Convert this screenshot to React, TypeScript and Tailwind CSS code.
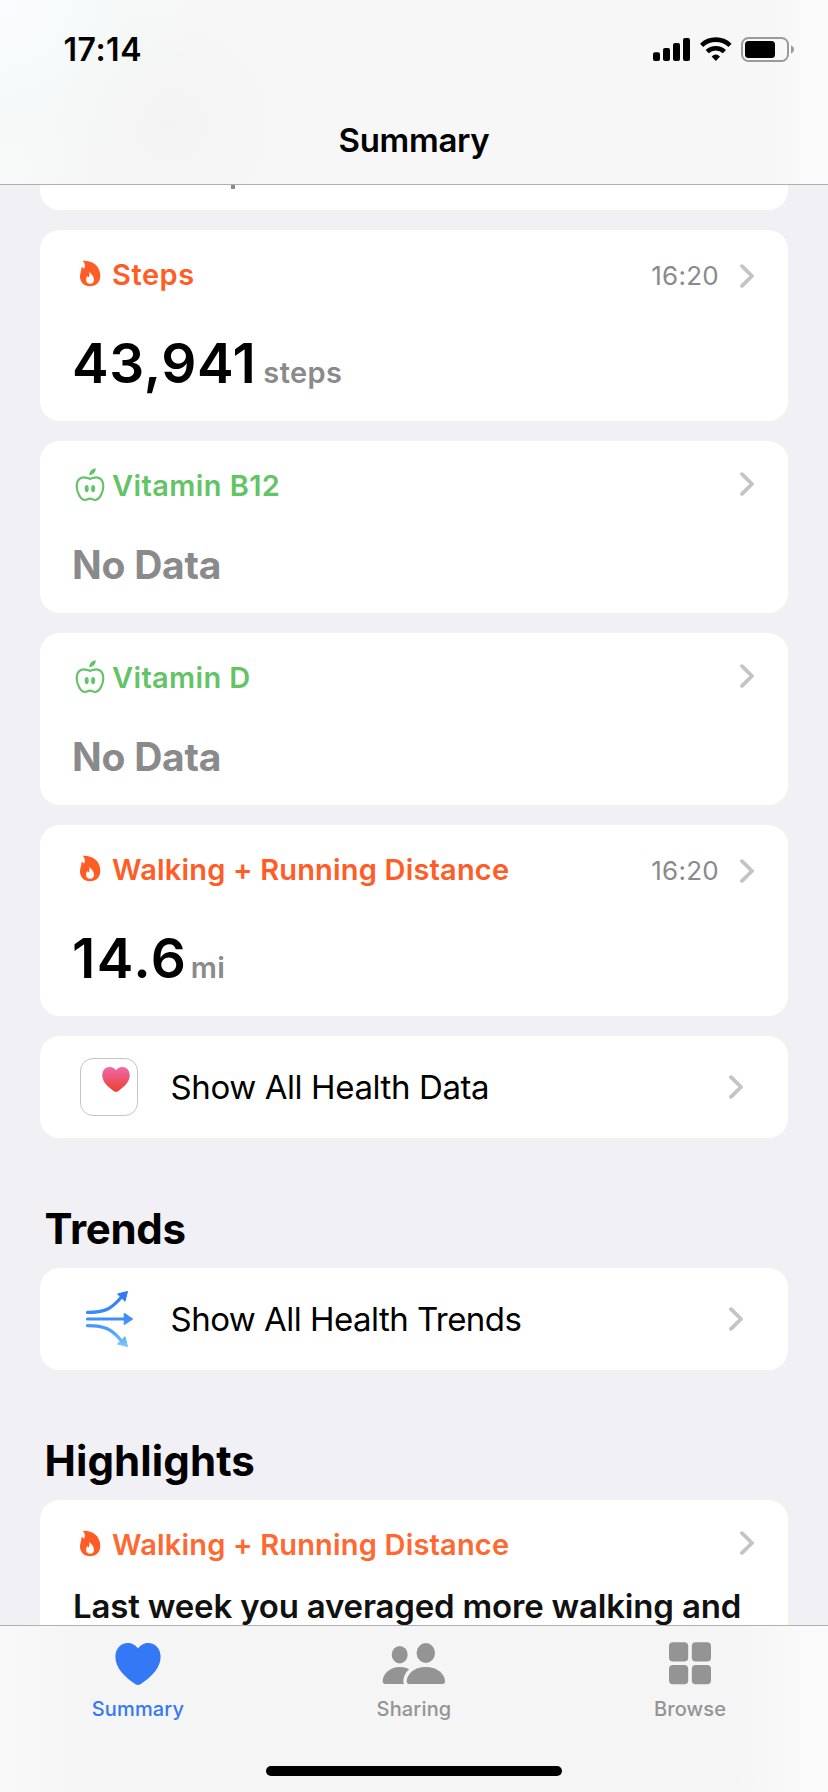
import type { ReactNode } from "react";
import clsx from "clsx";

type Category = "activity" | "nutrition";

interface HealthCardProps {
  category: Category;
  title: string;
  titleClass: string;
  time?: string;
  className?: string;
  children: ReactNode;
}

function Chevron({ className }: { className?: string }) {
  return (
    <svg width="14" height="24" viewBox="0 0 14 24" fill="none" className={clsx("shrink-0", className)}>
      <path d="M2 2.2 12 12 2 21.8" stroke="#c4c4c7" strokeWidth="3.8" strokeLinecap="round" strokeLinejoin="round" />
    </svg>
  );
}

function FlameIcon() {
  return (
    <svg width="39" height="39" viewBox="0 0 39 39" fill="currentColor" fillRule="evenodd" className="shrink-0">
      <path d="M9.8 5.7C18 5 27.3 9.8 27.3 20.8c0 6.5-4.3 10.5-10.3 10.5S7 27.3 7 21.3c0-3.5 1.7-5.5 1.5-9.3 1.3.2 2 .9 2.5 1.700 1.500-2.300 1.300-5-1.200-8ZM16.200 16.800c1.600 1.700 4.800 4.200 4.800 8 0 2.600-1.600 4-3.900 4-2.300 0-4-1.500-4-4 0-1.700.6-2.600 1.100-3.500.7.2 1.100.7 1.400 1.300 1-1.600 1.100-3.700.6-5.800Z" />
    </svg>
  );
}

function AppleIcon() {
  return (
    <svg width="39" height="39" viewBox="0 0 39 39" fill="none" className="shrink-0">
      <path
        d="M17 12.9C14 12 12.5 11.3 10.5 11.3 6.5 11.3 3.7 15 3.7 20c0 7 4.3 14 8.3 14 2 0 3-1.3 5-1.3s3 1.3 5 1.3c4 0 8.3-7 8.3-14 0-5-2.8-8.7-6.8-8.7-2 0-3.5.7-6.5 1.6Z"
        stroke="currentColor"
        strokeWidth="2.2"
        strokeLinejoin="round"
      />
      <path d="M16.2 9.2C16.2 5.5 18.8 2.5 22.7 2.2 22.9 6 20.3 9 16.2 9.2Z" fill="currentColor" />
      <ellipse cx="13.7" cy="22.6" rx="2" ry="3.7" fill="currentColor" />
      <ellipse cx="20.1" cy="22.6" rx="2" ry="3.7" fill="currentColor" />
    </svg>
  );
}

const HEART =
  "M23 5.5C25 2.5 28.5 0 33 0c7.5 0 12.6 5.8 12.6 14 0 10.5-8.6 19.5-20.1 27.2-1 .6-1.8.8-2.5.8s-1.500-.2-2.500-.8C9 33.500.4 24.500.4 14 .4 5.800 5.500 0 13 0c4.500 0 8 2.500 10 5.500Z";

function HealthAppIcon() {
  return (
    <div className="flex h-[58px] w-[58px] shrink-0 justify-end rounded-[13px] border border-[#c4c4c4] bg-white pt-[8px] pr-[7px]">
      <svg width="28" height="25" viewBox="0 0 46 42" preserveAspectRatio="none">
        <defs>
          <linearGradient id="heart" x1="0" y1="0" x2="0" y2="1">
            <stop offset="0" stopColor="#ee69ad" />
            <stop offset="1" stopColor="#eb3f2a" />
          </linearGradient>
        </defs>
        <path d={HEART} fill="url(#heart)" />
      </svg>
    </div>
  );
}

function TrendsIcon() {
  return (
    <svg width="58" height="58" viewBox="0 0 58 58" fill="none" className="shrink-0">
      <defs>
        <linearGradient id="trend" gradientUnits="userSpaceOnUse" x1="0" y1="1" x2="0" y2="57">
          <stop offset="0" stopColor="#3276f6" />
          <stop offset="0.5" stopColor="#3f8ff8" />
          <stop offset="0.7" stopColor="#4c9ff9" />
          <stop offset="1" stopColor="#80c8fa" />
        </linearGradient>
      </defs>
      <g stroke="url(#trend)" strokeWidth="3.2" strokeLinecap="round">
        <path d="M7.5 22.4C25 22.4 31.5 19 41.5 7" />
        <path d="M7.5 29.01 45 29" />
        <path d="M7.5 35.6C25 35.6 31.5 39 41.5 51" />
      </g>
      <g fill="url(#trend)" stroke="url(#trend)" strokeWidth="1" strokeLinejoin="round">
        <path d="M47.5 1.5 37.5 4 45 11.3Z" />
        <path d="M44.2 23.3v11.4L52.8 29Z" />
        <path d="M47.5 56.5 37.5 54 45 46.7Z" />
      </g>
    </svg>
  );
}

function HealthCard({ category, title, titleClass, time, className, children }: HealthCardProps) {
  return (
    <section className={clsx("shrink-0 rounded-[20px] bg-white pt-[29px] pr-[34px] pl-[33px]", className)}>
      <div
        className={clsx(
          "flex h-[31px] items-center",
          category === "activity" ? "text-[#ff5c26]" : "text-[#63c466]"
        )}
      >
        {category === "activity" ? <FlameIcon /> : <AppleIcon />}
        <h3 className={clsx("flex-1 text-[29px] leading-[31px] font-semibold whitespace-nowrap", titleClass)}>{title}</h3>
        {time && <span className="mt-[1px] mr-[21px] text-[26px] tracking-[0.25px] text-[#8a8a8d]">{time}</span>}
        <Chevron className={time ? "mt-[3px]" : "mb-[3px]"} />
      </div>
      {children}
    </section>
  );
}

function Value({ value, unit, valueClass }: { value: string; unit: string; valueClass: string }) {
  return (
    <div className="mt-[42px] -ml-px flex items-baseline">
      <span className={clsx("text-[55px] leading-[62px] font-[560] text-black", valueClass)}>{value}</span>
      <span className="text-[29px] font-semibold tracking-[0.4px] text-[#8a8a8c]">{unit}</span>
    </div>
  );
}

function NoData() {
  return (
    <p className="mt-[42px] -ml-px text-[39px] leading-[44px] font-bold tracking-[-0.25px] text-[#8a8a8c]">No Data</p>
  );
}

function LinkRow({ icon, label, labelClass }: { icon: ReactNode; label: string; labelClass: string }) {
  return (
    <div className="flex h-[102px] shrink-0 items-center rounded-[20px] bg-white pr-[45px] pl-10">
      {icon}
      <span className={clsx("ml-[32.5px] flex-1 text-[33px] leading-10 text-black", labelClass)}>{label}</span>
      <Chevron />
    </div>
  );
}

function SectionTitle({ children, className }: { children: string; className: string }) {
  return (
    <h2 className={clsx("h-[130px] shrink-0 pt-[66px] pl-[4.5px] text-[42px] leading-[50px] font-bold text-black", className)}>
      {children}
    </h2>
  );
}

function StatusBar() {
  return (
    <div className="flex h-[99px] items-center pr-[34px] pl-[63.5px]">
      <span className="flex-1 text-[32px] leading-10 font-semibold tracking-[0.5px]">17:14</span>
      <svg width="37" height="25" viewBox="0 0 37 25" className="mr-[10px]">
        <rect x="0" y="15.3" width="7" height="8.7" rx="2" />
        <rect x="10" y="11" width="7" height="13" rx="2" />
        <rect x="20" y="6" width="7" height="18" rx="2" />
        <rect x="30" y="1" width="7" height="23" rx="2" />
      </svg>
      <svg width="32" height="25" viewBox="0 0 32 25" fill="none" className="mr-[9px]">
        <path d="M1.6 8.3A20.7 20.7 0 0 1 30 8.3" stroke="#000" strokeWidth="4.6" />
        <path d="M7.2 14.7A12.5 12.5 0 0 1 24.4 14.7" stroke="#000" strokeWidth="4.6" />
        <path d="M11.6 19.6Q15.8 15.6 20 19.6L15.8 24Z" fill="#000" />
      </svg>
      <svg width="53" height="25" viewBox="0 0 53 25" fill="none">
        <rect x="1" y="1" width="46" height="23" rx="6.5" stroke="#9b9b9b" strokeWidth="2" />
        <rect x="4" y="4" width="30" height="17" rx="3.5" fill="#000" />
        <path d="M50 8.5c2 .7 3 2.2 3 4s-1 3.3-3 4Z" fill="#9b9b9b" />
      </svg>
    </div>
  );
}

function Tab({ icon, label, active }: { icon: ReactNode; label: string; active?: boolean }) {
  return (
    <div className={clsx("flex flex-1 flex-col items-center", active ? "text-[#3478f6]" : "text-[#949494]")}>
      {icon}
      <span className="mt-3 text-[20px] leading-6 font-medium tracking-[0.15px]">{label}</span>
    </div>
  );
}

export default function App() {
  return (
    <div className="flex h-[1792px] w-[828px] flex-col overflow-hidden bg-[#f1f0f5] font-['Inter','Liberation_Sans',sans-serif] text-black">
      <header className="h-[185px] shrink-0 border-b border-[#b0b0b2] bg-[#f7f7f7] bg-[radial-gradient(circle_at_170px_125px,#f3f3f3_0px,#f3f3f300_120px),radial-gradient(circle_at_0px_0px,#fafcff_0px,#f6f9f9_100px,#f6f9f900_200px),linear-gradient(to_right,#f9f9f9_0px,#f7f7f7_60px,#f7f7f7_770px,#fafafa_815px)]">
        <StatusBar />
        <h1 className="text-center text-[33px] leading-[82px] font-semibold tracking-[-0.3px]">Summary</h1>
      </header>

      <main className="flex h-[1440px] shrink-0 flex-col overflow-hidden px-10">
        {/* tail of the card scrolled under the header */}
        <div className="mb-5 h-[25px] shrink-0 rounded-b-[20px] bg-white pl-[190.5px]">
          <div className="h-[3.5px] w-[4px] bg-[#8a8a8c]" />
        </div>
        <HealthCard category="activity" title="Steps" titleClass="tracking-[0.55px]" time="16:20" className="mb-5 h-[191px]">
          <Value value="43,941" unit="steps" valueClass="mr-[7px] tracking-[0.6px]" />
        </HealthCard>
        <HealthCard category="nutrition" title="Vitamin B12" titleClass="tracking-[0.4px]" className="mb-5 h-[172px]">
          <NoData />
        </HealthCard>
        <HealthCard category="nutrition" title="Vitamin D" titleClass="tracking-[0.35px]" className="mb-5 h-[172px]">
          <NoData />
        </HealthCard>
        <HealthCard
          category="activity"
          title="Walking + Running Distance"
          titleClass="tracking-[0.18px]"
          time="16:20"
          className="mb-5 h-[191px]"
        >
          <Value value="14.6" unit="mi" valueClass="mr-[3px] tracking-[1.6px]" />
        </HealthCard>
        <LinkRow icon={<HealthAppIcon />} label="Show All Health Data" labelClass="tracking-[-0.4px]" />

        <SectionTitle className="tracking-[-0.28px]">Trends</SectionTitle>
        <LinkRow icon={<TrendsIcon />} label="Show All Health Trends" labelClass="tracking-[-0.53px]" />

        <SectionTitle className="tracking-[0.1px]">Highlights</SectionTitle>
        <HealthCard
          category="activity"
          title="Walking + Running Distance"
          titleClass="tracking-[0.18px] text-[#ff6830]"
          className="h-[191px]"
        >
          <p className="mt-6 text-[33px] leading-[44px] font-semibold tracking-[-0.19px] whitespace-nowrap text-[#111]">
            Last week you averaged more walking and
          </p>
        </HealthCard>
      </main>

      <nav className="flex h-[167px] shrink-0 flex-col items-center border-t border-[#b0b0b2] bg-[linear-gradient(to_right,#f9f9f9_0px,#f5f5f5_90px,#f5f5f5_730px,#fafafa_810px)] pt-[17px]">
        <div className="flex w-full">
          <Tab
            active
            label="Summary"
            icon={
              <svg width="46" height="42" viewBox="0 0 46 42" fill="currentColor">
                <path d={HEART} />
              </svg>
            }
          />
          <Tab
            label="Sharing"
            icon={
              <svg width="64" height="42" viewBox="0 0 64 42" fill="currentColor">
                <ellipse cx="17.7" cy="11.7" rx="8" ry="8.7" />
                <ellipse cx="43.8" cy="10" rx="9.2" ry="10" />
                <path d="M22 41H3.4C1.5 41 .7 40 .7 38.3.7 31.5 7.5 24 17.7 24c3.6 0 6.8.8 9.5 2.3-3.7 3.2-5.9 7.7-5.9 12 0 1.2.3 2 .7 2.7Z" />
                <path d="M27.5 41c-2 0-2.8-1-2.8-2.7 0-6.8 7.3-14.3 19.1-14.3S63 31.5 63 38.3c0 1.7-.8 2.7-2.8 2.7Z" />
              </svg>
            }
          />
          <Tab
            label="Browse"
            icon={
              <svg width="42" height="42" viewBox="0 0 42 42" fill="currentColor" className="overflow-visible">
                <rect x="0" y="-0.8" width="19.2" height="19.2" rx="4" />
                <rect x="22.8" y="-0.8" width="19.2" height="19.2" rx="4" />
                <rect x="0" y="22" width="19.2" height="19.2" rx="4" />
                <rect x="22.8" y="22" width="19.2" height="19.2" rx="4" />
              </svg>
            }
          />
        </div>
        <div className="mt-[45px] h-[10px] w-[296px] rounded-full bg-black" />
      </nav>
    </div>
  );
}
